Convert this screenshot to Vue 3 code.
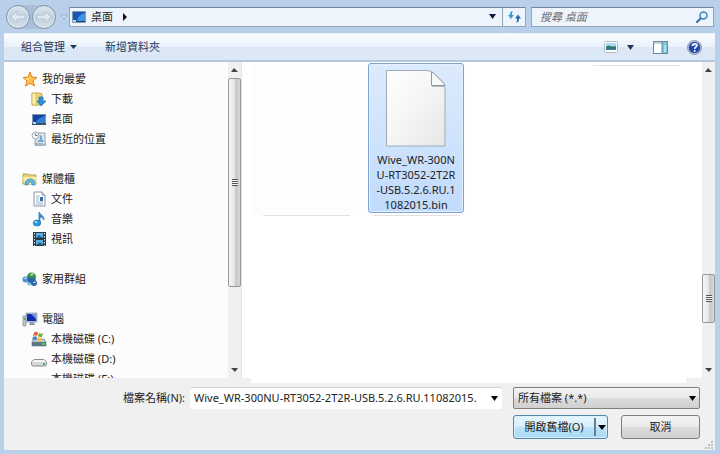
<script setup>
import { ref } from 'vue'

const groups = [
  {
    label: '我的最愛',
    icon: 'star',
    items: [
      { label: '下載', icon: 'download' },
      { label: '桌面', icon: 'desktop' },
      { label: '最近的位置', icon: 'recent' },
    ],
  },
  {
    label: '媒體櫃',
    icon: 'library',
    items: [
      { label: '文件', icon: 'document' },
      { label: '音樂', icon: 'music' },
      { label: '視訊', icon: 'video' },
    ],
  },
  { label: '家用群組', icon: 'homegroup', items: [] },
  {
    label: '電腦',
    icon: 'computer',
    items: [
      { label: '本機磁碟 (C:)', icon: 'system-drive' },
      { label: '本機磁碟 (D:)', icon: 'drive' },
      { label: '本機磁碟 (E:)', icon: 'drive' },
    ],
  },
]

const fileLines = ['Wive_WR-300N', 'U-RT3052-2T2R', '-USB.5.2.6.RU.1', '1082015.bin']
const fileName = ref('Wive_WR-300NU-RT3052-2T2R-USB.5.2.6.RU.11082015.')
const search = ref('')
</script>

<template>
  <div class="dialog">
    <!-- Address bar -->
    <header class="nav">
      <div class="nav__pill">
        <button class="nav__round" aria-label="上一頁">
          <svg width="16" height="14" viewBox="0 0 16 14">
            <path d="M7 1 1 7l6 6V9h8V5H7z" fill="#dfe8f1" stroke="#b4c4d4" />
          </svg>
        </button>
        <button class="nav__round" aria-label="下一頁">
          <svg width="16" height="14" viewBox="0 0 16 14">
            <path d="m9 1 6 6-6 6V9H1V5h8z" fill="#dfe8f1" stroke="#b4c4d4" />
          </svg>
        </button>
      </div>
      <button class="nav__history" aria-label="最近的頁面">
        <svg width="8" height="6" viewBox="0 0 8 6">
          <path d="M1 1h6L4 5z" fill="#e4edf7" stroke="#91a9c4" />
        </svg>
      </button>
      <div class="address">
        <svg class="address__icon" width="14" height="12" viewBox="0 0 14 12">
          <rect width="14" height="12" rx="1" fill="#8099b5" />
          <rect x="1" y="1" width="12" height="9" fill="#1c55b5" />
          <path d="M5 10c1-5 4-7 8-8v8z" fill="#4193de" />
          <path d="M1 10h12v1H1z" fill="#27466c" />
          <path d="M1 9h3v2H1z" fill="#a9def1" />
        </svg>
        <span class="address__path">桌面</span>
        <svg width="4" height="8" viewBox="0 0 4 8"><path d="m0 0 4 4-4 4z" fill="#111" /></svg>
        <button class="address__drop" aria-label="先前的位置">
          <svg width="7" height="5" viewBox="0 0 7 5"><path d="M0 0h7L3.500 5z" fill="#111a38" /></svg>
        </button>
        <button class="address__refresh" aria-label="重新整理">
          <svg width="13" height="13" viewBox="0 0 13 13">
            <path d="M5 1C2.500 1 2 2.500 2 5H0l3 4 3-4H4c0-2 0-3 1-4z" fill="#3d9ad0" />
            <path d="M8 12.500c2.500 0 3-1.500 3-4h2l-3-4-3 4h2c0 2 0 3-1 4z" fill="#2c68a8" />
          </svg>
        </button>
      </div>
      <div class="search">
        <input v-model="search" class="search__input" type="text" placeholder="搜尋 桌面" aria-label="搜尋 桌面" />
        <svg width="12" height="12" viewBox="0 0 12 12">
          <path d="M5 7 1 11" stroke="#376f9f" stroke-width="2" stroke-linecap="round" />
          <circle cx="7.500" cy="4.500" r="3.500" fill="#e9f5fd" stroke="#3a82b9" stroke-width="1.500" />
        </svg>
      </div>
    </header>

    <div class="toolbar">
      <button class="toolbar__button toolbar__button--organize">
        組合管理
        <svg width="7" height="4" viewBox="0 0 7 4"><path d="M0 0h7L3.500 4z" fill="#1e395b" /></svg>
      </button>
      <button class="toolbar__button">新增資料夾</button>
      <div class="toolbar__right">
        <button class="toolbar__button toolbar__button--view" aria-label="變更您的檢視">
          <svg width="14" height="12" viewBox="0 0 14 12">
            <rect x=".5" y=".5" width="13" height="11" rx="1" fill="#fff" stroke="#b0bac5" />
            <path d="M2 2h10v7H2z" fill="#a7dcf0" />
            <path d="M2 6c3-3 6 1 10-1v4H2z" fill="#2f776d" />
            <path d="M2 8h10v1H2z" fill="#3b83b5" />
          </svg>
          <svg width="7" height="5" viewBox="0 0 7 5"><path d="M0 0h7L3.500 5z" fill="#1e395b" /></svg>
        </button>
        <button class="toolbar__button" aria-label="預覽窗格">
          <svg width="15" height="13" viewBox="0 0 15 13">
            <rect x=".5" y=".5" width="14" height="12" fill="#fff" stroke="#6e8799" />
            <path d="M1 1h13v2H1z" fill="#c4d4df" />
            <path d="M9 1h5v11H9z" fill="#7fc3d6" />
            <path d="M9 1v11" stroke="#568c9f" />
            <path d="M11 4h2v7h-2z" fill="#a9e0ea" />
          </svg>
        </button>
        <button class="toolbar__button" aria-label="說明">
          <svg width="15" height="15" viewBox="0 0 15 15">
            <circle cx="7.500" cy="7.500" r="7" fill="#c5cedf" stroke="#8a96ad" />
            <circle cx="7.500" cy="7.500" r="5.800" fill="#2447a8" />
            <path d="M3 6a5 4 0 0 1 9 0z" fill="#5f82cc" />
            <path d="M5.500 6c0-3 4.500-3 4.500-.5C10 7 7.700 7 7.700 9" fill="none" stroke="#fff" stroke-width="1.500" />
            <circle cx="7.700" cy="11" r="1" fill="#fff" />
          </svg>
        </button>
      </div>
    </div>

    <div class="body">
      <!-- Navigation pane -->
      <nav class="tree">
        <ul v-for="group in groups" :key="group.label" class="tree__group">
          <li
            v-for="(item, index) in [group, ...group.items]"
            :key="item.label"
            class="tree__row"
            :class="{ 'tree__row--child': index > 0 }"
          >
            <a href="#" class="tree__link">
              <svg width="16" height="16" viewBox="0 0 16 16" aria-hidden="true">
                <g v-if="item.icon === 'star'">
                  <path d="m8 1 2 5 5 .5-4 3.500 1.500 5L8 12.300 3.500 15 5 10 1 6.500 6 6z" fill="#fbc348" stroke="#d9862b" stroke-linejoin="round" />
                  <path d="M8 3 7 7l-4 .3 3 2.200z" fill="#fff0a8" />
                </g>
                <g v-else-if="item.icon === 'download'">
                  <path d="M1 2h7l3 1v11H1z" fill="#ead277" stroke="#c9a94c" />
                  <path d="m1 2 4 1v12l-4-2z" fill="#faefb1" stroke="#d6be66" />
                  <path d="M8 6h4v4h3l-5 5-4-5h2z" fill="#2d8fd5" stroke="#1a6aae" stroke-width=".7" />
                </g>
                <g v-else-if="item.icon === 'desktop'">
                  <path d="M1 3h14v11H1z" fill="#8299b5" />
                  <path d="M2 4h12v8H2z" fill="#173fa4" />
                  <path d="M5 12c1-4 5-6 9-7v7z" fill="#347dd2" />
                  <path d="M1 12h14v2H1z" fill="#36526e" />
                  <path d="M2 11h3v2H2z" fill="#a2e1ef" />
                </g>
                <g v-else-if="item.icon === 'recent'">
                  <path d="M5 2h9v9l1 3H5l-1-3z" fill="#d9e6f0" stroke="#8da3b4" />
                  <circle cx="4.500" cy="4.500" r="3.500" fill="#f1f4f6" stroke="#a5afb7" />
                  <path d="M4.500 2.500v2h2" fill="none" stroke="#647b91" />
                  <path d="m9 4 2 1v3l2 3H6l3-3z" fill="#6cadd6" />
                  <path d="M3 12h9l2 3H4z" fill="#a8b5bf" />
                </g>
                <g v-else-if="item.icon === 'library'">
                  <path d="M1 3h5l1 1h7v9H1z" fill="#e5d376" stroke="#b9a654" />
                  <path d="M1 6h14l-1 7H2z" fill="#f5ecaa" />
                  <path d="M3 14c-1-8 12-8 10 0h-3c0-4-4-4-4 0z" fill="#62b7db" stroke="#3289b5" stroke-width=".7" />
                </g>
                <g v-else-if="item.icon === 'document'">
                  <path d="M3 1h8l3 3v11H3z" fill="#fff" stroke="#8794a3" />
                  <path d="M11 1v3h3" fill="#dbe4ed" stroke="#8794a3" />
                  <path d="M5 5h4M5 7h3M5 9h3M5 11h7M5 13h7" stroke="#9db4cf" />
                  <path d="M9 6h3v4H9z" fill="#316da5" />
                </g>
                <g v-else-if="item.icon === 'music'">
                  <path d="M8 1c1 3 5 3 5 8-1-2-2-3-4-3v6H8z" fill="#2d91d4" stroke="#1d75b6" stroke-width=".7" />
                  <ellipse cx="6" cy="12" rx="3.800" ry="3" fill="#289ade" stroke="#1b71ad" stroke-width=".7" />
                  <ellipse cx="5" cy="11" rx="1.500" ry="1" fill="#9bdaf5" />
                </g>
                <g v-else-if="item.icon === 'video'">
                  <path d="M2 1h13v14H2z" fill="#273849" />
                  <path d="M5 2h7v5H5zM5 9h7v5H5z" fill="#5eb1df" />
                  <path d="m5 7 3-3 4 3zM5 14l4-3 3 3z" fill="#205f91" />
                  <path d="M3.500 2v13M13.500 2v13" stroke="#dae2e8" stroke-dasharray="1.500 1.500" />
                </g>
                <g v-else-if="item.icon === 'homegroup'">
                  <circle cx="3.500" cy="8.500" r="3" fill="#4792cf" />
                  <circle cx="7.500" cy="12" r="2.500" fill="#88bddd" />
                  <circle cx="12" cy="12" r="3" fill="#2866ad" />
                  <circle cx="9.500" cy="6" r="4.500" fill="#35924b" />
                  <path d="M5.500 8a4 4 0 0 0 8 0q-4-3-8 0z" fill="#2d63ad" />
                  <path d="M8 4c1-2 3-2 4-1l-2 2z" fill="#b2e18f" />
                  <path d="M2 8c1-2 2-2 3 0zM11 12c1-2 2-2 3 0z" fill="#d2efff" />
                </g>
                <g v-else-if="item.icon === 'computer'">
                  <path d="M1 5h3v10H1z" fill="#bcc8cf" stroke="#7e8b94" stroke-width=".7" />
                  <path d="M2 7h1v2H2z" fill="#53a860" />
                  <path d="M4 2h11v9H4z" fill="#b8c7d8" stroke="#8496aa" stroke-width=".7" />
                  <path d="M5 3h9v7H5z" fill="#112bae" />
                  <path d="m9 3 5 5V3z" fill="#6c93e4" />
                  <path d="M8 11h4l1 3H7z" fill="#8b9dad" />
                </g>
                <g v-else-if="item.icon === 'system-drive'">
                  <path d="m3 8-2 3v4h14v-4l-2-3z" fill="#b7c5ca" stroke="#77858c" stroke-width=".7" />
                  <path d="M1 11h14v4H1z" fill="#607883" />
                  <path d="M11 12h3v2h-3z" fill="#50cc65" />
                  <path d="M3 2c2-2 3-1 4 0L6 5C5 4 4 4 2 5z" fill="#e45d2c" />
                  <path d="M8 2c1 1 3 1 4 0l-1 4C9 6 8 6 7 5z" fill="#76ae3b" />
                  <path d="M2 6c2-1 3-1 4 0L5 9C4 8 3 8 1 9z" fill="#3d82c8" />
                  <path d="M7 6c1 1 3 1 4 0l-1 4C8 10 7 10 6 9z" fill="#f2c341" />
                </g>
                <g v-else>
                  <path d="M3.500 8.500h9q3 1 3 3v2q0 1.500-2 1.500h-11q-2 0-2-1.500v-2q0-2 3-3z" fill="#d5d9dc" stroke="#858c90" />
                  <path d="M3.500 9h9q2 .5 2.500 2H1q.5-1.500 2.500-2z" fill="#f3f4f5" />
                  <path d="M12 12h2v2h-2z" fill="#4cad5d" />
                </g>
              </svg>
              {{ item.label }}
            </a>
          </li>
        </ul>
      </nav>
      <div class="scroll scroll--tree" aria-hidden="true">
        <svg class="scroll__arrow" viewBox="0 0 13 16"><path d="m3 10 3-4 4 4z" fill="#444" /></svg>
        <div class="scroll__thumb"><span class="scroll__grip"></span></div>
        <div class="scroll__after"></div>
        <svg class="scroll__arrow" viewBox="0 0 13 16"><path d="m3 6 4 4 3-4z" fill="#444" /></svg>
      </div>

      <!-- File list -->
      <main class="files">
        <div class="files__cell files__cell--bottom"></div>
        <div class="files__cell files__cell--bottom">
          <button class="file">
            <svg class="file__icon" width="62" height="78" viewBox="0 0 62 78">
              <defs>
                <linearGradient id="paper" x1="0" y1="0" x2="1" y2="1">
                  <stop offset="0" stop-color="#ffffff" />
                  <stop offset=".5" stop-color="#f5f5f5" />
                  <stop offset="1" stop-color="#e6e6e6" />
                </linearGradient>
              </defs>
              <path d="M1.500 1.500H42q4 0 7 3l8 8q3 3 3 7v57.500H1.500z" fill="url(#paper)" stroke="#9eabb7" />
              <path d="M46.500 3v13.500H60q-1-2-3-4l-8-8q-1-1-2.500-1.500z" fill="#f8f8f8" stroke="#8e989f" />
              <path d="M47 17.500h12" stroke="#b8b8b8" />
            </svg>
            <span v-for="line in fileLines" :key="line" class="file__line">{{ line }}</span>
          </button>
        </div>
        <div class="files__cell"></div>
        <div class="files__cell files__cell--top"></div>
      </main>
      <div class="scroll scroll--files" aria-hidden="true">
        <svg class="scroll__arrow" viewBox="0 0 13 16"><path d="m3 10 3-4 4 4z" fill="#444" /></svg>
        <div class="scroll__before"></div>
        <div class="scroll__thumb"><span class="scroll__grip"></span></div>
        <div class="scroll__after"></div>
        <svg class="scroll__arrow" viewBox="0 0 13 16"><path d="m3 6 4 4 3-4z" fill="#444" /></svg>
      </div>
    </div>

    <footer class="footer">
      <div class="footer__edge"></div>
      <div class="footer__row">
        <label class="footer__label" for="file-name">檔案名稱(N):</label>
        <div class="combo">
          <input id="file-name" v-model="fileName" class="combo__input" type="text" />
          <button class="combo__drop" aria-label="檔案名稱清單">
            <svg width="7" height="5" viewBox="0 0 7 5"><path d="M0 0h7L3.500 5z" fill="#000" /></svg>
          </button>
        </div>
        <div class="filter">
          <select class="filter__select" aria-label="檔案類型">
            <option>所有檔案 (*.*)</option>
          </select>
          <svg class="filter__arrow" width="7" height="5" viewBox="0 0 7 5"><path d="M0 0h7L3.500 5z" fill="#000" /></svg>
        </div>
      </div>
      <div class="footer__row footer__row--actions">
        <div class="split">
          <button class="split__main">開啟舊檔(O)</button>
          <button class="split__drop" aria-label="開啟選項">
            <svg width="8" height="5" viewBox="0 0 8 5"><path d="M0 0h8L4 5z" fill="#000" /></svg>
          </button>
        </div>
        <button class="cancel">取消</button>
      </div>
      <svg class="footer__resize" width="8" height="8" viewBox="0 0 8 8" aria-hidden="true">
        <path d="M6 0h2v2H6zM3 3h2v2H3zM6 3h2v2H6zM0 6h2v2H0zM3 6h2v2H3zM6 6h2v2H6z" fill="#bfc3c8" />
      </svg>
    </footer>
  </div>
</template>

<style>
body {
  margin: 0;
}
</style>

<style scoped>
.dialog {
  box-sizing: border-box;
  display: flex;
  flex-direction: column;
  height: 100vh;
  padding: 0 5px 4px 4px;
  background: #b9d0ea;
  color: #222;
  font-family: 'Noto Sans', 'Noto Sans CJK TC', sans-serif;
  font-size: 11px;
  line-height: 16px;
}

button,
input,
select {
  box-sizing: border-box;
  margin: 0;
  padding: 0;
  border: 0;
  background: none;
  color: inherit;
  font: inherit;
}

svg {
  display: block;
  flex-shrink: 0;
}

/* Address bar */
.nav {
  display: flex;
  align-items: center;
  height: 33px;
  padding: 0 1px 0 2px;
}

.nav__pill {
  display: flex;
  gap: 2px;
  margin-right: 2px;
  border-radius: 12px;
  background: #a9bfd8;
}

.nav__round {
  display: flex;
  align-items: center;
  justify-content: center;
  width: 24px;
  height: 24px;
  border: 1px solid #8496a9;
  border-radius: 50%;
  background: linear-gradient(#dbe5ef, #c3d1df 50%, #d3dee9);
  box-shadow: inset 0 0 0 1px #dfe8f0;
}

.nav__history {
  width: 11px;
  padding-left: 2px;
}

.address,
.search {
  box-sizing: border-box;
  display: flex;
  align-items: center;
  height: 20px;
  border: 1px solid #93a5b9;
  border-top-color: #74859a;
  background: #eef4fc;
}

.address {
  flex: 1;
  margin-right: 5px;
}

.address__icon {
  margin-left: 2px;
}

.address__path {
  margin: 0 10px 0 5px;
}

.address__drop {
  display: flex;
  justify-content: center;
  width: 20px;
  margin-left: auto;
}

.address__refresh {
  display: flex;
  align-items: center;
  justify-content: center;
  width: 23px;
  height: 18px;
  border-left: 1px solid #93a5b9;
}

.search {
  width: 183px;
  padding: 0 5px 0 8px;
}

.search__input {
  flex: 1;
  min-width: 0;
  outline: none;
}

.search__input::placeholder {
  color: #6d6d6d;
  font-style: italic;
  opacity: 1;
}

/* Toolbar */
.toolbar {
  box-sizing: border-box;
  display: flex;
  align-items: center;
  height: 29px;
  padding: 0 13px 0 17px;
  border-top: 1px solid #e8f1fb;
  border-bottom: 2px solid #b5c7dd;
  background: linear-gradient(#fafcff, #eaf1fb 50%, #dce7f5 50%, #dde8f6);
  color: #1e395b;
}

.toolbar__button {
  display: flex;
  align-items: center;
}

.toolbar__button--organize {
  gap: 5px;
  margin-right: 28px;
}

.toolbar__right {
  display: flex;
  align-items: center;
  gap: 19px;
  margin-left: auto;
}

.toolbar__button--view {
  gap: 9px;
}

/* Panes */
.body {
  display: flex;
  flex: 1;
  min-height: 0;
  background: #fff;
}

.tree {
  box-sizing: border-box;
  width: 224px;
  padding: 7px 0 0 18px;
  overflow: hidden;
  background: #fcfcfc;
}

.tree__group {
  margin: 0 0 20px;
  padding: 0;
  list-style: none;
}

.tree__row {
  height: 20px;
}

.tree__row--child {
  padding-left: 9px;
}

.tree__link {
  display: flex;
  align-items: center;
  gap: 4px;
  height: 20px;
  color: #222;
  text-decoration: none;
  white-space: nowrap;
}

.scroll {
  display: flex;
  flex-direction: column;
  flex-shrink: 0;
  width: 13px;
  background: #f0f0f0;
}

.scroll--tree {
  margin-right: 1px;
  border-right: 1px solid #dde7f1;
}

.scroll__arrow {
  width: 13px;
  height: 16px;
}

.scroll__thumb {
  box-sizing: border-box;
  display: flex;
  align-items: center;
  justify-content: center;
  border: 1px solid #979797;
  border-radius: 2px;
  background: linear-gradient(90deg, #f6f6f6, #e5e5e7 50%, #c7c8cc 60%, #d5d6da);
}

.scroll__grip {
  width: 6px;
  height: 7px;
  background: repeating-linear-gradient(#555 0 1px, #f3f3f3 1px 2px);
}

.scroll--tree .scroll__thumb {
  flex: 208;
}

.scroll--tree .scroll__after {
  flex: 76;
}

.scroll--files .scroll__before {
  flex: 196;
}

.scroll--files .scroll__thumb {
  height: 49px;
}

.scroll--files .scroll__after {
  flex: 39;
}

.files {
  display: grid;
  flex: 1;
  grid-template-columns: repeat(4, 110px);
  align-content: start;
  min-width: 0;
  padding: 1px 0 0 8px;
  overflow: hidden;
}

.files__cell {
  display: flex;
  flex-direction: column;
  align-items: center;
}

.files__cell--bottom {
  background: #fdfdfd;
}

.files__cell--bottom::after,
.files__cell--top::before {
  content: '';
  width: 87px;
  height: 1px;
  background: #e2e2e2;
}

.files__cell--bottom::after {
  margin-top: auto;
}

.files__cell--top::before {
  margin-top: 2px;
}

.file {
  display: flex;
  flex-direction: column;
  align-items: center;
  width: 96px;
  height: 150px;
  margin-bottom: 2px;
  padding-top: 5px;
  border: 1px solid #7da2ce;
  border-radius: 3px;
  background: linear-gradient(#dcebfd, #c1dbfc);
  box-shadow: inset 0 0 0 1px #e4f0fe;
}

.file__icon {
  margin-bottom: 5px;
}

.file__line {
  line-height: 15px;
  white-space: nowrap;
}

/* File name, filter and actions */
.footer {
  position: relative;
  height: 72px;
  background: #f0f0f0;
}

.footer__edge {
  height: 5px;
  margin: 0 29px 0 247px;
  background: #fff;
}

.footer__row {
  display: flex;
  align-items: center;
  height: 22px;
  margin: 4px 15px 0 0;
}

.footer__row--actions {
  justify-content: flex-end;
  gap: 13px;
  height: 24px;
  margin-top: 6px;
}

.footer__label {
  width: 181px;
  margin-right: 5px;
  text-align: right;
}

.combo {
  display: flex;
  flex: 1;
  height: 22px;
  margin-right: 11px;
  border-radius: 2px;
  background: #fff;
  box-shadow: inset 0 1px 0 #d5d5d5;
}

.combo__input {
  flex: 1;
  min-width: 0;
  padding-left: 4px;
  outline: none;
}

.combo__drop {
  display: flex;
  align-items: center;
  justify-content: center;
  width: 15px;
}

.filter {
  position: relative;
  width: 187px;
  height: 22px;
}

.filter__select {
  width: 100%;
  height: 22px;
  padding: 0 20px 0 4px;
  border: 1px solid #7f7f7f;
  border-radius: 2px;
  background: linear-gradient(#f2f2f2, #e9e9e9 50%, #dcdcdc 50%, #d0d0d0);
  appearance: none;
}

.filter__arrow {
  position: absolute;
  top: 9px;
  right: 4px;
  pointer-events: none;
}

.split,
.cancel {
  box-sizing: border-box;
  height: 24px;
  border: 1px solid #7f7f7f;
  border-radius: 3px;
}

.split {
  display: flex;
  align-items: center;
  width: 95px;
  border-color: #4f87a8;
  background: linear-gradient(#e8f5fc, #d6eefb 50%, #bce4f9 50%, #a6d8f3);
  box-shadow: inset 0 0 0 1px #d8f3fd;
}

.split__main {
  flex: 1;
  height: 22px;
}

.split__drop {
  display: flex;
  align-items: center;
  justify-content: center;
  width: 13px;
  height: 18px;
  border-left: 2px solid #627f8e;
}

.cancel {
  width: 79px;
  background: linear-gradient(#f3f3f3, #ebebeb 50%, #dddddd 50%, #d0d0d0);
}

.footer__resize {
  position: absolute;
  right: 2px;
  bottom: 1px;
}
</style>
